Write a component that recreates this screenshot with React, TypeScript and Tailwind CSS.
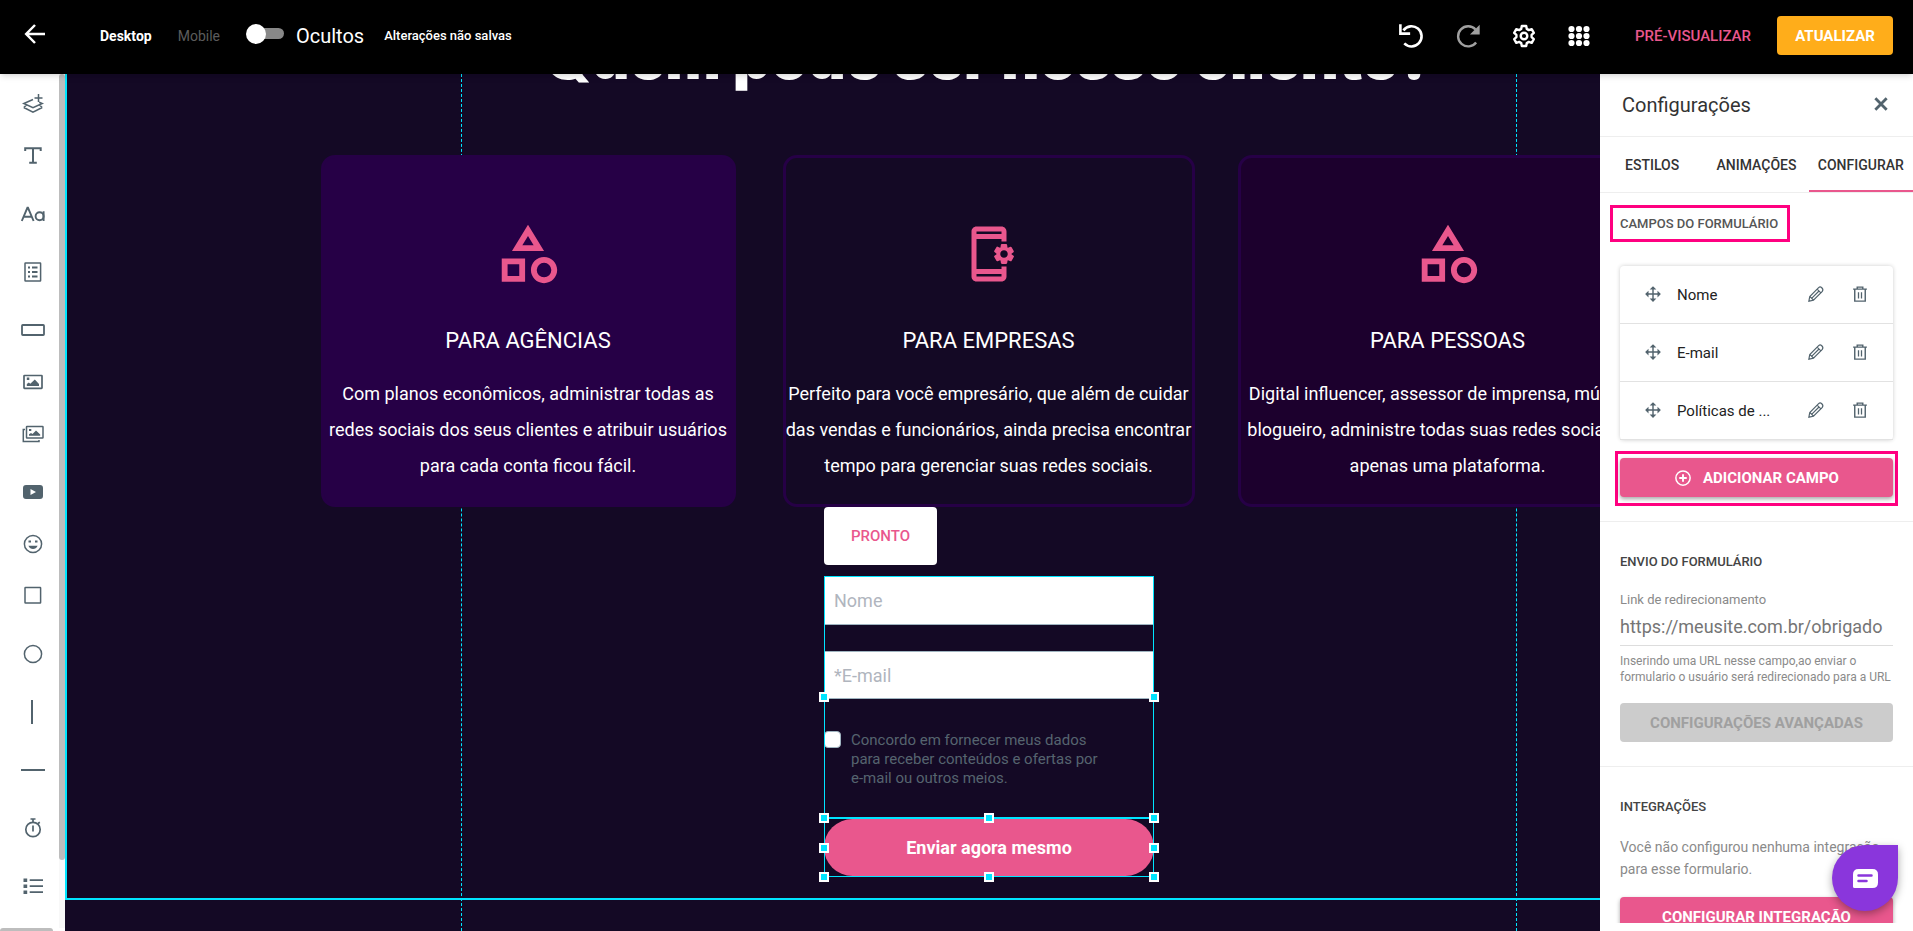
import { useState } from 'react';
import type { ReactNode } from 'react';
import { MdOutlineAppSettingsAlt, MdOutlineCategory } from 'react-icons/md';

type IconProps = { className?: string };

const fields = ['Nome', 'E-mail', 'Políticas de ...'];

const tabs = ['ESTILOS', 'ANIMAÇÕES', 'CONFIGURAR'];

const cards = [
  {
    title: 'PARA AGÊNCIAS',
    lines: [
      'Com planos econômicos, administrar todas as',
      'redes sociais dos seus clientes e atribuir usuários',
      'para cada conta ficou fácil.',
    ],
    icon: <MdOutlineCategory size={70} />,
    style: 'bg-[#260046] border-[#260046]',
  },
  {
    title: 'PARA EMPRESAS',
    lines: [
      'Perfeito para você empresário, que além de cuidar',
      'das vendas e funcionários, ainda precisa encontrar',
      'tempo para gerenciar suas redes sociais.',
    ],
    icon: <MdOutlineAppSettingsAlt size={60} />,
    style: 'w-[412px] justify-self-end border-[#260046]',
  },
  {
    title: 'PARA PESSOAS',
    lines: [
      'Digital influencer, assessor de imprensa, músicos,',
      'blogueiro, administre todas suas redes sociais em',
      'apenas uma plataforma.',
    ],
    icon: <MdOutlineCategory size={70} />,
    style: 'bg-[#1c002d] border-[#260046]',
  },
];

function Svg({ children, size = 24, className }: { children: ReactNode; size?: number; className?: string }) {
  return (
    <svg
      width={size}
      height={size}
      viewBox="0 0 24 24"
      fill="none"
      stroke="currentColor"
      strokeWidth="1.5"
      className={className}
      aria-hidden="true"
    >
      {children}
    </svg>
  );
}

const tools: { name: string; gap?: boolean; icon: ReactNode }[] = [
  {
    name: 'Seção',
    icon: (
      <Svg>
        <path d="M12 7.5 2.8 11.5l9.2 4.2 9.2-4.2-3-1.3M2.8 15.5l9.2 4.7 9.2-4.7M5.5 13l-2.7 2.5M18.5 13l2.7 2.5M17.5 2v8M13.5 6h8" />
      </Svg>
    ),
  },
  {
    name: 'Título',
    icon: (
      <Svg>
        <path d="M4.2 7V4.200h15.500V7M12 4.200v14.500M8.200 18.800h7.600" strokeWidth="2" />
      </Svg>
    ),
  },
  {
    name: 'Texto',
    gap: true,
    icon: (
      <Svg>
        <path d="M.8 19 6.4 5.8h.6L12.6 19M2.8 14.7h7.8M22.6 9.3V19" strokeWidth="1.9" />
        <circle cx="18.6" cy="14.2" r="4" strokeWidth="1.9" />
      </Svg>
    ),
  },
  {
    name: 'Formulário',
    gap: true,
    icon: (
      <Svg>
        <rect x="4" y="3" width="15.600" height="18" rx="0.5" />
        <path d="M7 7.5h2M7 12h2M7 16.5h2M11 7.5h5.5M11 12h5.5M11 16.5h5.5" strokeWidth="2" />
      </Svg>
    ),
  },
  {
    name: 'Botão',
    gap: true,
    icon: (
      <Svg>
        <rect x="1" y="7" width="22" height="10" rx="0.8" strokeWidth="1.8" />
      </Svg>
    ),
  },
  {
    name: 'Imagem',
    icon: (
      <Svg>
        <rect x="3" y="5.500" width="18" height="12.800" rx="0.5" strokeWidth="1.7" />
        <path d="M5.800 16v-2l2-1.500 1.500 1.200 4.500-4.200 4.200 4.500V16zM5.800 7.500h2.500V10H5.800z" fill="currentColor" stroke="none" />
      </Svg>
    ),
  },
  {
    name: 'Galeria',
    icon: (
      <Svg>
        <rect x="5.500" y="4.600" width="16.500" height="11.500" rx="0.5" />
        <path d="M4 7.500H2.300v12h15.700v-1.500" />
        <path d="M8 13.800v-1.500l2-1.300 1.500 1 3.500-3.500 4.200 4v1.300zM8 7h2.300v2H8z" fill="currentColor" stroke="none" />
      </Svg>
    ),
  },
  {
    name: 'Vídeo',
    gap: true,
    icon: (
      <Svg>
        <path
          d="M5 5h14q3 0 3 3v8q0 3-3 3H5q-3 0-3-3V8q0-3 3-3zm4.500 4v6l5.500-3z"
          fill="currentColor"
          fillRule="evenodd"
          stroke="none"
        />
      </Svg>
    ),
  },
  {
    name: 'Ícone',
    icon: (
      <Svg>
        <circle cx="12" cy="12" r="8.600" />
        <path d="M7.500 9.500h2.500M14 9.500h2.500" strokeWidth="2" />
        <path d="M7.400 13.800h9.200q-1.500 3.200-4.600 3.200t-4.600-3.200z" fill="currentColor" stroke="none" />
      </Svg>
    ),
  },
  {
    name: 'Quadrado',
    icon: (
      <Svg>
        <rect x="4" y="3.500" width="15.600" height="15.600" rx="0.5" />
      </Svg>
    ),
  },
  {
    name: 'Círculo',
    gap: true,
    icon: (
      <Svg>
        <circle cx="12" cy="12" r="8.600" />
      </Svg>
    ),
  },
  {
    name: 'Linha vertical',
    gap: true,
    icon: (
      <Svg>
        <path d="M11 0v24" strokeWidth="2" />
      </Svg>
    ),
  },
  {
    name: 'Linha horizontal',
    gap: true,
    icon: (
      <Svg>
        <path d="M0 12h24" strokeWidth="2" />
      </Svg>
    ),
  },
  {
    name: 'Contador',
    gap: true,
    icon: (
      <Svg>
        <circle cx="12" cy="13.500" r="7.200" strokeWidth="1.700" />
        <path d="M9.500 3h5M12 3v3M17 7.500l1.800-1.300M12 9.500v6" strokeWidth="1.700" />
      </Svg>
    ),
  },
  {
    name: 'Lista',
    gap: true,
    icon: (
      <Svg>
        <path d="M2.500 6.200h3.700M2.500 12.200h3.700M2.500 18.200h3.700" strokeWidth="3.600" />
        <path d="M8.700 6.200H22M8.700 12.200H22M8.700 18.200H22" strokeWidth="1.800" />
      </Svg>
    ),
  },
];

function BackIcon() {
  return (
    <Svg>
      <path d="M22 12H4M12 3 3.200 12l8.800 9" strokeWidth="2.500" />
    </Svg>
  );
}

function UndoIcon({ className }: IconProps) {
  return (
    <Svg size={26} className={className}>
      <path d="M5 6.800A9.300 9.300 0 1 1 5.800 18.800" strokeWidth="2.400" />
      <path d="M2.200 1.200v8.600h9" strokeWidth="2.400" />
    </Svg>
  );
}

function RedoIcon({ className }: IconProps) {
  return (
    <Svg size={26} className={className}>
      <path d="M19 6A9.300 9.300 0 1 0 19.500 18" strokeWidth="2.200" />
      <path d="M22.800 1.500v9h-9z" fill="currentColor" stroke="none" />
    </Svg>
  );
}

function GearIcon() {
  return (
    <Svg>
      <path
        d="M9.800 2h4.400l.6 2.900 2 1.200 2.900-.9 2.100 3.700-2.200 2v2.200l2.200 2-2.100 3.700-2.900-.9-2 1.200-.6 2.900H9.800l-.6-2.900-2-1.200-2.900.9-2.100-3.700 2.200-2v-2.200l-2.200-2 2.100-3.700 2.900.9 2-1.200z"
        strokeWidth="2.400"
        strokeLinejoin="round"
      />
      <circle cx="12" cy="12" r="3.300" strokeWidth="2.400" />
    </Svg>
  );
}

function GridIcon() {
  return (
    <Svg>
      {[5, 12, 19].map((y) =>
        [4.500, 12, 19.500].map((x) => (
          <circle key={`${x}-${y}`} cx={x} cy={y} r="3.100" fill="currentColor" stroke="none" />
        )),
      )}
    </Svg>
  );
}

function MoveIcon() {
  return (
    <Svg size={18}>
      <path d="M12 3v18M3 12h18" strokeWidth="1.900" />
      <path d="m7.500 6 4.500-4.500L16.500 6zM7.500 18l4.500 4.500 4.500-4.500zM6 7.500 1.500 12 6 16.500zM18 7.500l4.500 4.500-4.500 4.500z" fill="currentColor" stroke="none" />
    </Svg>
  );
}

function PencilIcon() {
  return (
    <Svg size={18}>
      <path
        d="m2.500 21.500 1.200-6.200L15.500 3.500q2-1.800 4.200.2 2.500 2.300.7 4.800L8.600 20.300zM13.500 5.500l5 5M4 15.500l4.500 4.500M6.500 17.500l9.500-9.500"
        strokeWidth="1.600"
      />
    </Svg>
  );
}

function TrashIcon() {
  return (
    <Svg size={18}>
      <path d="M2.800 5.500h18.400M8.300 5.500V2.800h7.400v2.700M5 5.500v16h14v-16" strokeWidth="1.900" />
      <path d="M10 9.500v8.500M14 9.500v8.500" strokeWidth="1.700" />
    </Svg>
  );
}

function Handle({ className }: IconProps) {
  return (
    <span
      className={`absolute z-10 size-[10px] -translate-x-1/2 -translate-y-1/2 border-2 border-white bg-[#00e5ff] ${className}`}
    />
  );
}

function Header({ hidden, onToggle }: { hidden: boolean; onToggle: () => void }) {
  return (
    <header className="relative z-20 flex h-[74px] shrink-0 items-center bg-black pb-[3px] pl-[23px] pr-5 text-white shadow-md">
      <button type="button" aria-label="Voltar" className="mr-[53px] pb-1">
        <BackIcon />
      </button>
      <button type="button" className="mr-[26px] text-sm font-bold">
        Desktop
      </button>
      <button type="button" className="mr-6 text-sm text-[#5c5c5c]">
        Mobile
      </button>
      <label className="mr-5 flex items-center gap-3 text-xl">
        <span className="relative ml-[2px] flex h-5 w-[38px] items-center pb-1">
          <input type="checkbox" checked={hidden} onChange={onToggle} className="peer sr-only" />
          <span className="ml-2 h-[11px] w-[30px] rounded-full bg-[#888888]" />
          <span className="absolute -top-[2px] left-0 size-5 rounded-full bg-white peer-checked:left-[18px]" />
        </span>
        Ocultos
      </label>
      <span className="text-[13px] font-medium">Alterações não salvas</span>
      <div className="ml-auto flex items-center">
        <button type="button" aria-label="Desfazer" className="mr-[31px]">
          <UndoIcon />
        </button>
        <button type="button" aria-label="Refazer" className="mr-[31px] text-[#a0a0a0]">
          <RedoIcon />
        </button>
        <button type="button" aria-label="Ajustes" className="mr-[31px]">
          <GearIcon />
        </button>
        <button type="button" aria-label="Aplicativos" className="mr-11">
          <GridIcon />
        </button>
        <button type="button" className="mr-[26px] pt-px text-[15px] font-medium text-[#e9578d]">
          PRÉ-VISUALIZAR
        </button>
        <button type="button" className="h-[39px] w-[116px] rounded-sm bg-[#ffad1a] pt-px text-[15px] font-bold">
          ATUALIZAR
        </button>
      </div>
    </header>
  );
}

function Toolbar() {
  return (
    <aside className="flex w-[65px] shrink-0 bg-white text-[#52636d]">
      <div className="flex min-w-0 flex-1 flex-col justify-between">
        <nav className="flex flex-col items-center overflow-hidden pl-[7px] pt-1">
          {tools.map((tool) => (
            <button
              key={tool.name}
              type="button"
              aria-label={tool.name}
              className={`flex h-[52px] w-full shrink-0 items-center justify-center ${tool.gap ? 'mt-[6px]' : ''}`}
            >
              {tool.icon}
            </button>
          ))}
        </nav>
        <div className="h-[3px] w-[53px] shrink-0 rounded-t bg-[#bdbdbd]" />
      </div>
      <div className="mb-[3px] w-[6px] shrink-0 bg-[#f8f8f8]">
        <div className="h-[92%] rounded-full bg-[#bdbdbd]" />
      </div>
    </aside>
  );
}

function LeadForm() {
  return (
    <form className="relative mx-auto w-[330px]" onSubmit={(e) => e.preventDefault()}>
      <button
        type="button"
        className="mb-[11px] block h-[58px] w-[113px] rounded-sm bg-white text-[15px] font-medium text-[#e9578d]"
      >
        PRONTO
      </button>
      <div className="relative pb-[30px] pt-px outline-1 -outline-offset-1 outline-[#00e5ff]">
        <input
          type="text"
          aria-label="Nome"
          placeholder="Nome"
          className="block h-12 w-full border-b border-[#9fb4c0] bg-white px-[10px] text-lg placeholder:text-[#b0b5be]"
        />
        <input
          type="email"
          aria-label="E-mail"
          placeholder="*E-mail"
          className="mt-[26px] block h-12 w-full border-y border-[#9fb4c0] bg-white px-[10px] text-lg placeholder:text-[#b0b5be]"
        />
        <label className="mt-8 flex gap-[10px] text-[15px] leading-[19px] text-[#56646f]">
          <input
            type="checkbox"
            className="size-[17px] shrink-0 appearance-none rounded-[4px] border border-[#9fb4c0] bg-white"
          />
          <span>
            Concordo em fornecer meus dados
            <br />
            para receber conteúdos e ofertas por
            <br />
            e-mail ou outros meios.
          </span>
        </label>
        <Handle className="left-0 top-1/2" />
        <Handle className="left-full top-1/2" />
      </div>
      <div className="relative py-px outline-1 -outline-offset-1 outline-[#00e5ff]">
        <button type="submit" className="block h-[57px] w-full rounded-full bg-[#e9578d] text-lg font-bold text-white">
          Enviar agora mesmo
        </button>
        <Handle className="left-0 top-0" />
        <Handle className="left-1/2 top-0" />
        <Handle className="left-full top-0" />
        <Handle className="left-0 top-1/2" />
        <Handle className="left-full top-1/2" />
        <Handle className="left-0 top-full" />
        <Handle className="left-1/2 top-full" />
        <Handle className="left-full top-full" />
      </div>
    </form>
  );
}

function Canvas() {
  return (
    <main className="min-w-0 flex-1 overflow-hidden bg-[#140925] text-white">
      {/* The page keeps its full width and continues below the settings panel */}
      <div className="relative h-full w-[calc(100%+313px)]">
        <div className="absolute inset-y-0 left-1/2 w-[1056px] -translate-x-1/2 border-x border-dashed border-[#00e5ff]" />
        <section className="relative flex h-[826px] flex-col items-center shadow-[inset_2px_-2px_0_#00e5ff]">
          <h1 className="-mt-12 mb-[65px] h-16 whitespace-nowrap font-['Inter'] text-[59px] font-black leading-[64px]">
            Quem pode ser nosso cliente?
          </h1>
          <div className="grid grid-cols-[415px_416px_420px] gap-[43px]">
            {cards.map((card) => (
              <article
                key={card.title}
                className={`flex h-[352px] flex-col items-center rounded-[14px] border-[3px] text-center ${card.style}`}
              >
                <div className="mt-[61px] flex h-[70px] items-center text-[#e9578d]">{card.icon}</div>
                <h2 className="mt-9 text-[22px] leading-8">{card.title}</h2>
                <p className="mt-[19px] whitespace-nowrap text-lg leading-9">
                  {card.lines.map((line) => (
                    <span key={line} className="block">
                      {line}
                    </span>
                  ))}
                </p>
              </article>
            ))}
          </div>
          <LeadForm />
        </section>
      </div>
    </main>
  );
}

function FieldRow({ name }: { name: string }) {
  return (
    <li className="flex h-[58px] items-center border-b border-[#e2e2e2] pl-6 pr-6 text-[#52636d]">
      <button type="button" aria-label={`Mover ${name}`} className="pb-[2px]">
        <MoveIcon />
      </button>
      <span className="ml-[15px] flex-1 pt-px text-[15px] text-[#222222]">{name}</span>
      <button type="button" aria-label={`Editar ${name}`} className="pb-[2px]">
        <PencilIcon />
      </button>
      <button type="button" aria-label={`Excluir ${name}`} className="ml-[26px] pb-[2px]">
        <TrashIcon />
      </button>
    </li>
  );
}

function SettingsPanel() {
  const [activeTab, setActiveTab] = useState('CONFIGURAR');
  const [redirectUrl, setRedirectUrl] = useState('');

  return (
    <aside className="relative flex w-[313px] shrink-0 flex-col bg-white pb-2 text-[#333333]">
      <div className="flex h-[63px] shrink-0 items-center justify-between border-b border-[#eeeeee] pl-[22px] pr-6">
        <h2 className="text-xl">Configurações</h2>
        <button type="button" aria-label="Fechar" className="pb-[2px] text-[#52636d]">
          <Svg size={16}>
            <path d="m3.500 3.500 17 17M20.500 3.500l-17 17" strokeWidth="4.200" />
          </Svg>
        </button>
      </div>
      <div className="grid h-14 shrink-0 grid-cols-3 border-b border-[#eeeeee] text-sm font-medium">
        {tabs.map((tab) => (
          <button
            key={tab}
            type="button"
            onClick={() => setActiveTab(tab)}
            className={`border-b-2 pt-[2px] ${activeTab === tab ? 'border-[#e9578d]' : 'border-transparent'}`}
          >
            {tab}
          </button>
        ))}
      </div>

      <div className="min-h-0 flex-1 overflow-hidden">
        <section className="h-[329px] border-b border-[#eeeeee] px-5 pt-3">
          <h3 className="-ml-[10px] flex h-[37px] w-[180px] items-center border-[3px] border-[#ff0080] pl-[7px] text-[13px] font-medium text-[#555555]">
            CAMPOS DO FORMULÁRIO
          </h3>
          <ul className="mt-6 rounded-sm shadow-[0_0_4px_rgba(0,0,0,0.2)]">
            {fields.map((field) => (
              <FieldRow key={field} name={field} />
            ))}
          </ul>
          <div className="-mx-[5px] mt-[11px] border-[3px] border-[#ff0080] px-[2px] pb-[6px] pt-1">
            <button
              type="button"
              className="flex h-[39px] w-full items-center justify-center gap-[11px] rounded-sm bg-[#e9578d] pt-px text-[15px] font-bold text-white shadow-[0_2px_4px_rgba(0,0,0,0.35)]"
            >
              <Svg size={18}>
                <circle cx="12" cy="12" r="9.500" strokeWidth="2" />
                <path d="M12 7v10M7 12h10" strokeWidth="2.500" />
              </Svg>
              ADICIONAR CAMPO
            </button>
          </div>
        </section>

        <section className="h-[245px] border-b border-[#eeeeee] px-5 pt-8">
          <h3 className="text-[13px] font-medium leading-4 text-[#444444]">ENVIO DO FORMULÁRIO</h3>
          <label htmlFor="redirect" className="mt-[22px] block text-[13px] leading-4 text-[#8a8a8a]">
            Link de redirecionamento
          </label>
          <input
            id="redirect"
            type="text"
            value={redirectUrl}
            placeholder="https://meusite.com.br/obrigado"
            onChange={(e) => setRedirectUrl(e.target.value)}
            className="block h-[38px] w-full border-b border-[#dddddd] text-lg outline-none placeholder:text-[#757575]"
          />
          <p className="mt-[7px] whitespace-nowrap text-xs leading-4 text-[#8a8a8a]">
            Inserindo uma URL nesse campo,ao enviar o
            <br />
            formulario o usuário será redirecionado para a URL
          </p>
          <button
            type="button"
            disabled
            className="mt-[18px] h-[39px] w-full rounded-sm bg-[#cccccc] pt-px text-[15px] font-bold text-[#a0a0a0]"
          >
            CONFIGURAÇÕES AVANÇADAS
          </button>
        </section>

        <section className="px-5 pt-8">
          <h3 className="text-[13px] font-medium leading-4 text-[#444444]">INTEGRAÇÕES</h3>
          <p className="mt-[21px] whitespace-nowrap text-sm leading-[22px] text-[#8a8a8a]">
            Você não configurou nenhuma integração
            <br />
            para esse formulario.
          </p>
          <button
            type="button"
            className="mt-[17px] h-[39px] w-full rounded-sm bg-[#e9578d] pt-px text-[15px] font-bold text-white shadow-[0_2px_4px_rgba(0,0,0,0.35)]"
          >
            CONFIGURAR INTEGRAÇÃO
          </button>
        </section>
      </div>

      <button
        type="button"
        aria-label="Abrir chat"
        className="absolute bottom-5 right-[15px] flex size-[66px] items-center justify-center rounded-full rounded-tr-md bg-[#8a36dc] text-white shadow-[0_3px_8px_rgba(0,0,0,0.35)]"
      >
        <svg width="25" height="19" viewBox="0 0 25 19" aria-hidden="true">
          <path d="M5.500 0h14Q25 0 25 5.500v8q0 5.500-5.500 5.500H1.500Q0 19 0 17.500v-12Q0 0 5.500 0z" fill="currentColor" />
          <path d="M5.500 6.500h13M5.500 12h8" stroke="#8a36dc" strokeWidth="2.500" strokeLinecap="round" />
        </svg>
      </button>
    </aside>
  );
}

export default function App() {
  const [hidden, setHidden] = useState(false);

  return (
    <div className="flex h-screen flex-col overflow-hidden font-['Roboto',sans-serif]">
      <Header hidden={hidden} onToggle={() => setHidden(!hidden)} />
      <div className="flex min-h-0 flex-1">
        <Toolbar />
        <Canvas />
        <SettingsPanel />
      </div>
    </div>
  );
}
